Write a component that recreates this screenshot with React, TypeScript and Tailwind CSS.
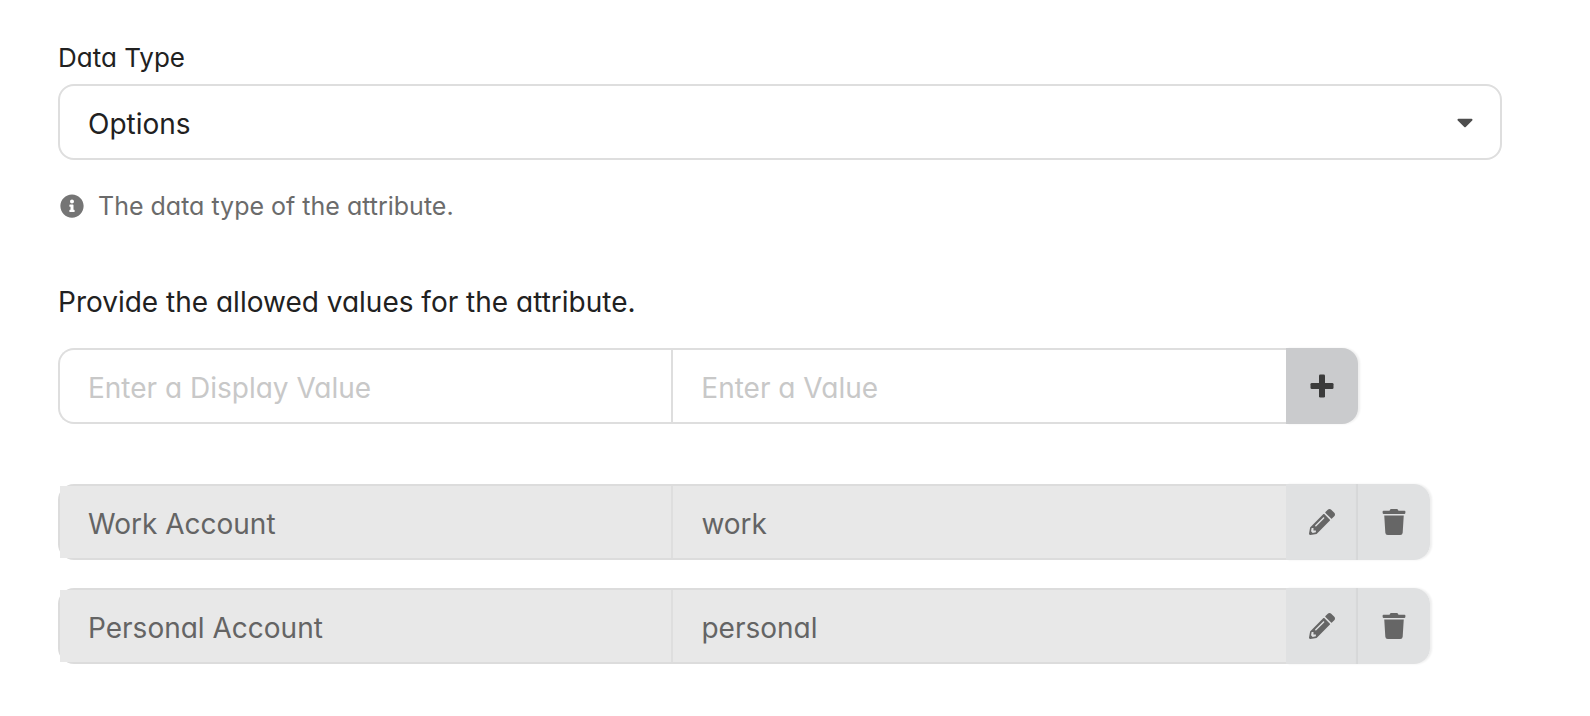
import { useState } from "react"
import { FaCaretDown, FaInfoCircle, FaPencilAlt, FaTrash } from "react-icons/fa"

interface Option {
  label: string
  value: string
}

const dataTypes = ["Options", "Text", "Integer", "Decimal", "Boolean", "Object"]

const PlusIcon = () => (
  <svg width="24" height="24" viewBox="0 0 24 24" fill="currentColor" aria-hidden="true">
    <rect x="9" y="0.5" width="6" height="23" rx="1.3" />
    <rect x="0.5" y="9" width="23" height="6" rx="1.3" />
  </svg>
)

const OptionRow = ({ option, onEdit, onDelete }: { option: Option; onEdit: () => void; onDelete: () => void }) => {
  const inputClass =
    "w-full min-w-0 bg-[#e8e8e8] px-7 pt-[3px] text-[28px] leading-9 text-[#646464] outline-none border-[#dedede]"

  return (
    <li className="flex h-19 w-[95%]">
      <div className="flex min-w-0 flex-1 rounded-l-2xl border-2 border-r-0 border-[#dcdcdc]">
        <input aria-label="Display value" className={`${inputClass} border-r-2`} value={option.label} disabled />
        <input aria-label="Value" className={inputClass} value={option.value} disabled />
      </div>
      <div className="flex rounded-r-2xl shadow-[2px_0_2px_rgba(34,36,38,0.08)]">
        <button
          type="button"
          aria-label="Edit"
          onClick={onEdit}
          className="flex w-18 items-center justify-center bg-[#e0e1e2] text-[#666] shadow-[inset_-2px_0_1px_rgba(34,36,38,0.05)]"
        >
          <FaPencilAlt size={26} />
        </button>
        <button
          type="button"
          aria-label="Delete"
          onClick={onDelete}
          className="flex w-18 items-center justify-center rounded-r-2xl bg-[#e0e1e2] text-[#666]"
        >
          <FaTrash size={26} />
        </button>
      </div>
    </li>
  )
}

const App = () => {
  const [dataType, setDataType] = useState("Options")
  const [label, setLabel] = useState("")
  const [value, setValue] = useState("")
  const [options, setOptions] = useState<Option[]>([
    { label: "Work Account", value: "work" },
    { label: "Personal Account", value: "personal" },
  ])

  const removeOption = (index: number) => setOptions(options.filter((_, i) => i !== index))

  const addOption = () => {
    if (!label || !value) return
    setOptions([...options, { label, value }])
    setLabel("")
    setValue("")
  }

  // Move the option back into the entry fields
  const editOption = (index: number) => {
    setLabel(options[index].label)
    setValue(options[index].value)
    removeOption(index)
  }

  const entryClass =
    "w-full min-w-0 px-7 pt-[3px] text-[28px] leading-9 text-[#212121] placeholder:text-[#c8c8c8] outline-none"

  return (
    <div className="min-h-screen bg-white pt-10 pr-22 pb-13 pl-[58px] font-['Inter',sans-serif] text-[#212121] [font-feature-settings:'cv11']">
      <label htmlFor="data-type" className="block text-[26px] leading-9">
        Data Type
      </label>
      <div className="relative mt-2">
        <select
          id="data-type"
          value={dataType}
          onChange={(e) => setDataType(e.target.value)}
          className="block h-19 w-full appearance-none rounded-2xl border-2 border-[#dedede] bg-white px-7 pt-[3px] text-[28px] leading-9 outline-none"
        >
          {dataTypes.map((type) => (
            <option key={type}>{type}</option>
          ))}
        </select>
        <FaCaretDown
          size={26}
          className="pointer-events-none absolute top-[25px] right-6 text-[#4d4d4d]"
        />
      </div>
      <p className="mt-7 flex items-center gap-3.5 pl-0.5 text-[25px] leading-9 text-[#6b6b6b]">
        <FaInfoCircle size={24} className="text-[#757575]" />
        The data type of the attribute.
      </p>

      <p className="mt-15 text-[28px] leading-9">Provide the allowed values for the attribute.</p>
      <div className="mt-7 flex h-19 w-[90%]">
        <div className="flex min-w-0 flex-1 rounded-l-2xl border-2 border-r-0 border-[#dedede]">
          <input
            aria-label="Display value"
            placeholder="Enter a Display Value"
            value={label}
            onChange={(e) => setLabel(e.target.value)}
            className={`${entryClass} border-r-2 border-[#dedede]`}
          />
          <input
            aria-label="Value"
            placeholder="Enter a Value"
            value={value}
            onChange={(e) => setValue(e.target.value)}
            className={entryClass}
          />
        </div>
        <button
          type="button"
          aria-label="Add"
          onClick={addOption}
          className="flex w-18 items-center justify-center rounded-r-2xl bg-[#cacbcd] text-[#3b3b3b] shadow-[2px_0_2px_rgba(34,36,38,0.08)]"
        >
          <PlusIcon />
        </button>
      </div>

      <ul className="mt-15 flex flex-col gap-7">
        {options.map((option, index) => (
          <OptionRow
            key={option.value}
            option={option}
            onEdit={() => editOption(index)}
            onDelete={() => removeOption(index)}
          />
        ))}
      </ul>
    </div>
  )
}

export default App
